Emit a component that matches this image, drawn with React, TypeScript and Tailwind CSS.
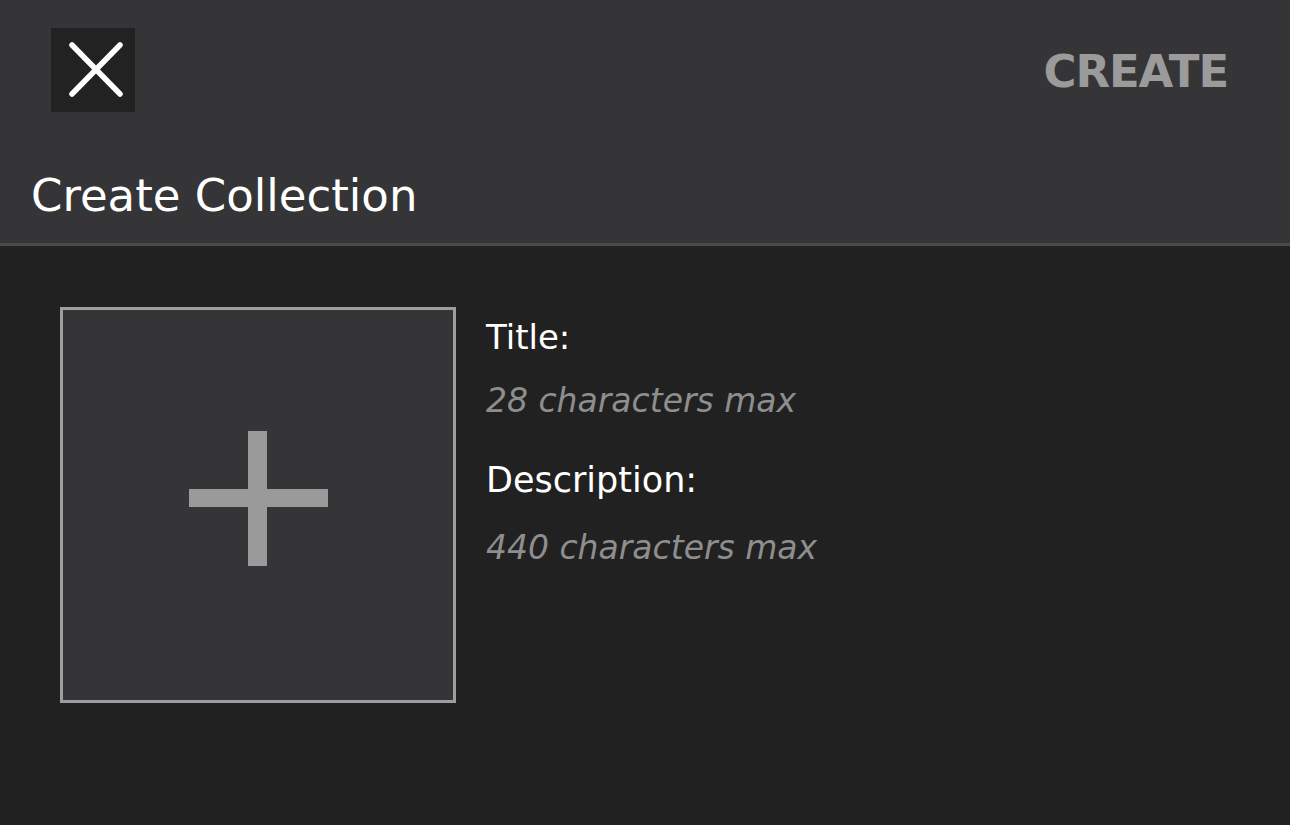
const font = { fontFamily: '"DejaVu Sans", "Noto Sans", sans-serif' };

function CloseIcon() {
  return (
    <svg width="84" height="84" viewBox="0 0 84 84" aria-hidden="true">
      <path
        d="M21 17 L69 66 M69 17 L21 66"
        stroke="#ffffff"
        strokeWidth="5.5"
        strokeLinecap="round"
        fill="none"
      />
    </svg>
  );
}

export default function App() {
  return (
    <div className="min-h-screen bg-[#212121] text-white" style={font}>
      <header className="border-b-[3px] border-[#4a4a4c] bg-[#353537]">
        <div className="flex items-start justify-between pl-[51px] pr-[62px] pt-[28px]">
          <button className="flex size-[84px] items-center justify-center bg-[#222222]">
            <CloseIcon />
          </button>
          <span className="mt-[21px] text-[45px] font-bold leading-none tracking-tight text-[#9b9b9b]">
            CREATE
          </span>
        </div>
        <h1 className="pl-[31px] pt-[61px] pb-[25px] text-[45px] leading-none">
          Create Collection
        </h1>
      </header>

      <main className="flex gap-[30px] pl-[60px] pt-[61px]">
        <button className="flex size-[396px] shrink-0 items-center justify-center border-[3px] border-[#9e9e9e] bg-[#353537] pb-[14px]">
          <svg width="139" height="135" viewBox="0 0 139 135" aria-hidden="true">
            <rect x="59" y="0" width="19" height="135" fill="#9a9a9a" />
            <rect x="0" y="58" width="139" height="18" fill="#9a9a9a" />
          </svg>
        </button>

        <div className="pt-[13px]">
          <p className="text-[34px] leading-none">Title:</p>
          <p className="mt-[30px] text-[33px] italic leading-none text-[#8e8e8e]">
            28 characters max
          </p>
          <p className="mt-[46px] text-[35px] leading-none">Description:</p>
          <p className="mt-[33px] text-[33px] italic leading-none text-[#8e8e8e]">
            440 characters max
          </p>
        </div>
      </main>
    </div>
  );
}
